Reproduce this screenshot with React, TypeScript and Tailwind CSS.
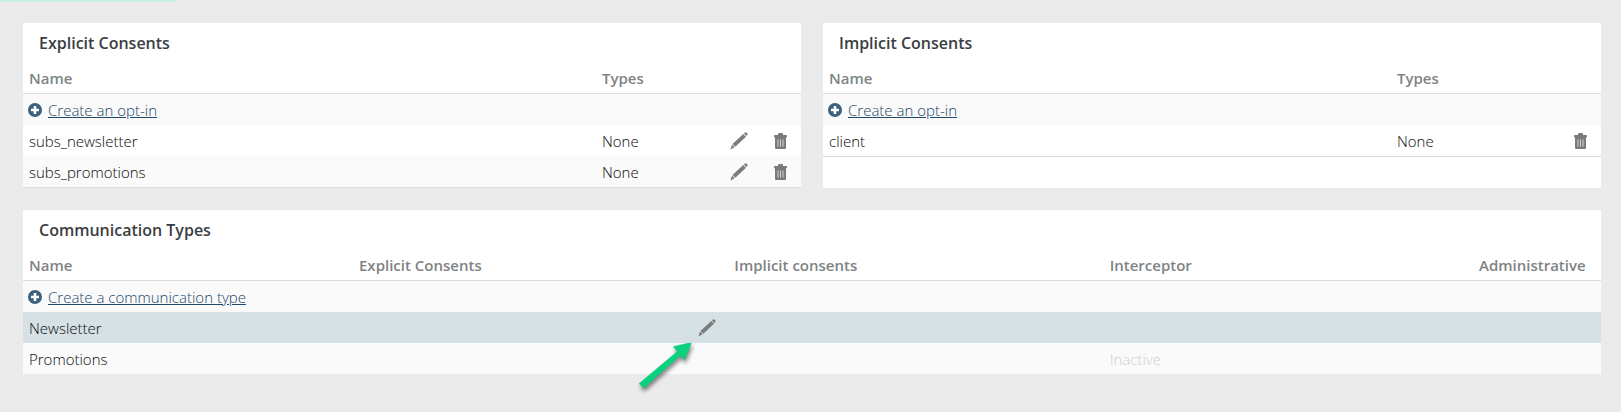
import type { ReactNode } from 'react';
import clsx from 'clsx';

interface Consent {
  name: string;
  types: string;
  editable: boolean;
}

interface CommunicationType {
  name: string;
  explicit?: string;
  implicit?: string;
  interceptor?: string;
  selected?: boolean;
}

const explicitConsents: Consent[] = [
  { name: 'subs_newsletter', types: 'None', editable: true },
  { name: 'subs_promotions', types: 'None', editable: true },
];

const implicitConsents: Consent[] = [{ name: 'client', types: 'None', editable: false }];

const communicationTypes: CommunicationType[] = [
  { name: 'Newsletter', selected: true },
  { name: 'Promotions', interceptor: 'Inactive' },
];

const PencilIcon = () => (
  <svg viewBox="0 0 18 18" className="h-[18px] w-[18px]" fill="currentColor" aria-hidden="true">
    <path d="M13.9 1.6 15 .6a1 1 0 0 1 1.4 0l.9.9a1 1 0 0 1 0 1.4l-1 1.1z" />
    <path d="M13.2 1.900 16 4.700 5.300 14.700 2.500 11.900z" />
    <path d="M2.1 12.500 4.700 15.200.4 17.500z" />
  </svg>
);

const TrashIcon = () => (
  <svg viewBox="0 0 13 16" className="h-4 w-[13px]" aria-hidden="true">
    <path fill="currentColor" d="M4 2V1a1 1 0 0 1 1-1h3a1 1 0 0 1 1 1v1h3a1 1 0 0 1 1 1v1.300H0V3a1 1 0 0 1 1-1z" />
    <path fill="currentColor" d="M1 4h11v11a1 1 0 0 1-1 1H2a1 1 0 0 1-1-1z" />
    <path stroke="#d2d2d2" strokeWidth="1" d="M4 6.500v7M6.500 6.500v7M9 6.500v7" />
  </svg>
);

const PlusIcon = () => (
  <svg viewBox="0 0 14 14" className="h-3.5 w-3.5 shrink-0" aria-hidden="true">
    <circle cx="7" cy="7" r="7" fill="#3a617f" />
    <path d="M7 3v8M3 7h8" stroke="#fff" strokeWidth="2.600" />
  </svg>
);

const IconButton = ({ label, children }: { label: string; children: ReactNode }) => (
  <button type="button" aria-label={label} className="block cursor-pointer text-[#7b7b7b]">
    {children}
  </button>
);

const Panel = ({ title, children }: { title: string; children: ReactNode }) => (
  <section className="bg-white">
    <h2 className="h-10 px-4 text-base leading-10 font-semibold text-[#3a3e42]">{title}</h2>
    {children}
  </section>
);

const HeadCell = ({ className, children }: { className?: string; children?: ReactNode }) => (
  <th className={clsx('h-[31px] border-b border-[#d9dbdc] pl-1.5 font-semibold text-[#808385]', className)}>
    {children}
  </th>
);

const CreateRow = ({ label, colSpan }: { label: string; colSpan: number }) => (
  <tr className="h-[31px] bg-[#fafafa]">
    <td colSpan={colSpan} className="px-[5px]">
      <div className="flex items-center gap-1.5">
        <PlusIcon />
        <a href="#" className="text-[#22486a] underline">
          {label}
        </a>
      </div>
    </td>
  </tr>
);

const ConsentTable = ({ consents, actionsClass }: { consents: Consent[]; actionsClass: string }) => (
  <table className="w-full table-fixed border-separate border-spacing-0 border-b border-[#d9dbdc] text-left">
    <thead>
      <tr>
        <HeadCell>Name</HeadCell>
        <HeadCell className="w-[118px]">Types</HeadCell>
        <HeadCell className={actionsClass} />
      </tr>
    </thead>
    <tbody>
      <CreateRow label="Create an opt-in" colSpan={3} />
      {consents.map((consent, index) => (
        <tr key={consent.name} className={clsx('h-[31px]', index % 2 === 1 && 'bg-[#fafafa]')}>
          <td className="px-1.5">{consent.name}</td>
          <td className="px-1.5">{consent.types}</td>
          <td className="pr-3.5">
            <div className="flex items-center justify-end gap-[26px]">
              {consent.editable && (
                <IconButton label={`Edit ${consent.name}`}>
                  <PencilIcon />
                </IconButton>
              )}
              <IconButton label={`Delete ${consent.name}`}>
                <TrashIcon />
              </IconButton>
            </div>
          </td>
        </tr>
      ))}
    </tbody>
  </table>
);

// Green pointer that calls out the edit button of the selected row
const Pointer = () => (
  <svg
    viewBox="0 0 64 60"
    className="pointer-events-none absolute top-full right-8 h-[60px] w-16 drop-shadow-[1px_3px_2px_rgba(0,0,0,0.5)]"
    aria-hidden="true"
  >
    <path fill="#0bd07d" d="M60 -1 52.500 17.500 48.500 12.500 11.500 45.500 7 40.500 45 8.500 41 3.500z" />
  </svg>
);

const CommunicationTable = () => (
  <table className="w-full table-fixed border-separate border-spacing-0 text-left">
    <thead>
      <tr>
        <HeadCell className="w-[330px]">Name</HeadCell>
        <HeadCell>Explicit Consents</HeadCell>
        <HeadCell>Implicit consents</HeadCell>
        <HeadCell>Interceptor</HeadCell>
        <HeadCell className="w-[122px] pr-4 pl-0! text-right">Administrative</HeadCell>
      </tr>
    </thead>
    <tbody>
      <CreateRow label="Create a communication type" colSpan={5} />
      {communicationTypes.map((type) => (
        <tr key={type.name} className={clsx('h-[31px]', type.selected ? 'bg-[#d6e1e6]' : 'bg-[#fafafa]')}>
          <td className="px-1.5">{type.name}</td>
          <td className="relative pr-3 pl-1.5">
            <div className="flex items-center justify-between">
              <span>{type.explicit}</span>
              {type.selected && (
                <IconButton label={`Edit explicit consents of ${type.name}`}>
                  <PencilIcon />
                </IconButton>
              )}
            </div>
            {type.selected && <Pointer />}
          </td>
          <td className="px-1.5">{type.implicit}</td>
          <td className="px-1.5 text-[#cfd0d2]">{type.interceptor}</td>
          <td />
        </tr>
      ))}
    </tbody>
  </table>
);

export default function App() {
  return (
    <main className="min-h-screen bg-[#ebebeb] font-['Open_Sans',sans-serif] text-[15px] leading-5 font-light text-[#08090a]">
      <div className="h-0.5 w-44 bg-[#c9f0df]" />
      <div className="flex flex-col gap-[22px] pt-[21px] pr-5 pb-9 pl-[23px]">
        <div className="grid grid-cols-2 gap-[22px]">
          <Panel title="Explicit Consents">
            <ConsentTable consents={explicitConsents} actionsClass="w-[87px]" />
          </Panel>
          <Panel title="Implicit Consents">
            <ConsentTable consents={implicitConsents} actionsClass="w-[92px]" />
          </Panel>
        </div>
        <Panel title="Communication Types">
          <CommunicationTable />
        </Panel>
      </div>
    </main>
  );
}
